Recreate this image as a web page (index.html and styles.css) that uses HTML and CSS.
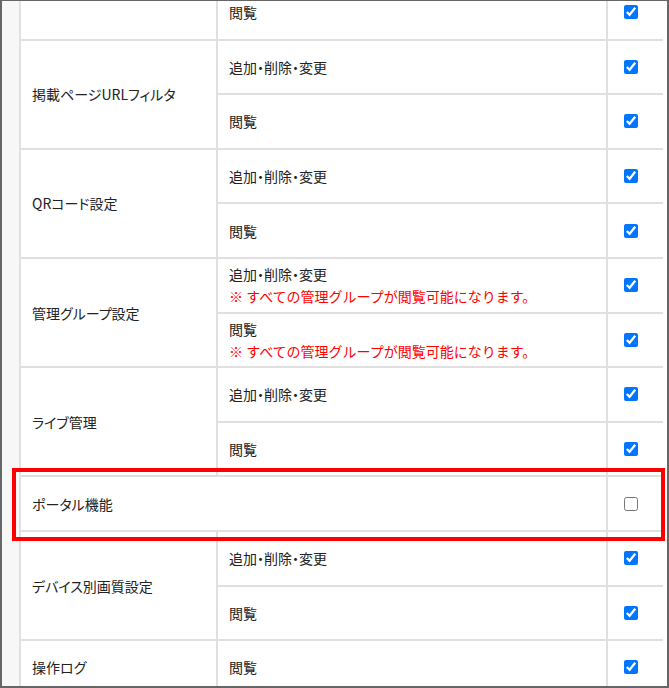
FILE: index.html
```html
<!DOCTYPE html>
<html lang="ja">
<head>
<meta charset="utf-8">
<link rel="stylesheet" href="styles.css">
</head>
<body>
<div class="frame">
  <div class="strip"></div>
  <div class="main">
    <table class="perm">
      <colgroup><col class="c1"><col class="c2"><col class="c3"></colgroup>
      <tbody>
        <tr><td class="name"></td><td class="op">閲覧</td><td class="chk"><input type="checkbox" checked></td></tr>
        <tr><td class="name" rowspan="2">掲載ページURLフィルタ</td><td class="op">追加・削除・変更</td><td class="chk"><input type="checkbox" checked></td></tr>
        <tr><td class="op">閲覧</td><td class="chk"><input type="checkbox" checked></td></tr>
        <tr><td class="name" rowspan="2">QRコード設定</td><td class="op">追加・削除・変更</td><td class="chk"><input type="checkbox" checked></td></tr>
        <tr><td class="op">閲覧</td><td class="chk"><input type="checkbox" checked></td></tr>
        <tr><td class="name" rowspan="2">管理グループ設定</td><td class="op">追加・削除・変更<div class="note">※ すべての管理グループが閲覧可能になります。</div></td><td class="chk"><input type="checkbox" checked></td></tr>
        <tr><td class="op">閲覧<div class="note">※ すべての管理グループが閲覧可能になります。</div></td><td class="chk"><input type="checkbox" checked></td></tr>
        <tr><td class="name" rowspan="2">ライブ管理</td><td class="op">追加・削除・変更</td><td class="chk"><input type="checkbox" checked></td></tr>
        <tr><td class="op">閲覧</td><td class="chk"><input type="checkbox" checked></td></tr>
        <tr><td class="name" colspan="2">ポータル機能</td><td class="chk"><input type="checkbox"></td></tr>
        <tr><td class="name" rowspan="2">デバイス別画質設定</td><td class="op">追加・削除・変更</td><td class="chk"><input type="checkbox" checked></td></tr>
        <tr><td class="op">閲覧</td><td class="chk"><input type="checkbox" checked></td></tr>
        <tr><td class="name">操作ログ</td><td class="op">閲覧</td><td class="chk"><input type="checkbox" checked></td></tr>
      </tbody>
    </table>
  </div>
  <div class="rpad"></div>
  <div class="highlight"></div>
</div>
</body>
</html>
```
FILE: styles.css
```css
html, body {
  margin: 0;
  padding: 0;
  background: #ffffff;
}
.frame {
  position: relative;
  width: 669px;
  height: 688px;
  box-sizing: border-box;
  border: 2px solid #666666;
  border-top-width: 1px;
  display: flex;
  overflow: hidden;
  background: #ffffff;
  font-family: "Noto Sans CJK JP", "Noto Sans", sans-serif;
  font-size: 14px;
  color: #222222;
}
.strip {
  width: 17px;
  flex: none;
  background: #f7f7f7;
}
.main {
  width: 644px;
  flex: none;
  overflow: hidden;
}
.rpad {
  flex: 1;
  background: #ffffff;
}
.perm {
  width: 644px;
  border-collapse: collapse;
  table-layout: fixed;
  margin-top: -17px;
}
.c1 { width: 197px; }
.c2 { width: 390px; }
.c3 { width: 57px; }
.perm td {
  border: 2px solid #e0e0e0;
  height: 52.6px;
  padding: 0 0 0 11px;
  vertical-align: middle;
  line-height: 22px;
  font-feature-settings: "palt";
}
.perm td.chk {
  padding-left: 16px;
}
.perm input {
  width: 14px;
  height: 14px;
  margin: 0;
  vertical-align: middle;
  display: block;
}
.note {
  color: #ff0000;
  font-feature-settings: normal;
}
.highlight {
  position: absolute;
  left: 10px;
  top: 467px;
  width: 653px;
  height: 73px;
  box-sizing: border-box;
  border: 4px solid #ff0000;
}
```
